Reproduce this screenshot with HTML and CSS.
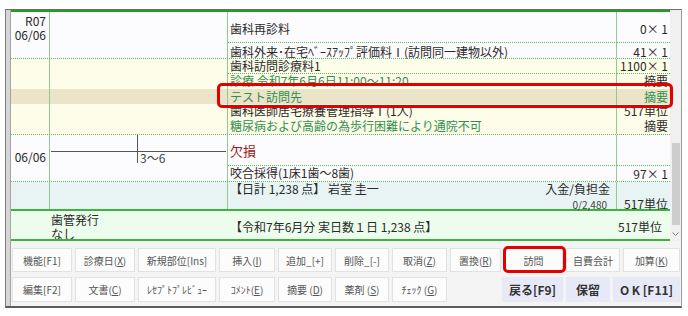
FILE: index.html
```html
<!DOCTYPE html>
<html lang="ja">
<head>
<meta charset="utf-8">
<title>診療</title>
<link rel="stylesheet" href="styles.css">
</head>
<body>
<div class="frame">
  <div class="upper">
    <div class="list">
      <div class="block b1">
        <div class="date d1">R07<br>06/06</div>
        <div class="teeth"></div>
        <div class="cnt g1 sep p9">歯科再診料</div>
        <div class="amt g1 sep p9">0×&nbsp;1</div>
        <div class="cnt g2 p1">歯科外来･在宅ﾍﾞｰｽｱｯﾌﾟ評価料Ⅰ(訪問同一建物以外)</div>
        <div class="amt g2 p1">41×&nbsp;1</div>
      </div>
      <div class="block b2">
        <div class="hl"></div>
        <div class="date"></div>
        <div class="teeth"></div>
        <div class="cnt g1 sep lh14">歯科訪問診療料1</div>
        <div class="amt g1 sep lh14">1100×&nbsp;1</div>
        <div class="cnt g2 lh14 green">診療 令和7年6月6日11:00～11:20</div>
        <div class="amt g2 lh14">摘要</div>
        <div class="cnt g3 green">テスト訪問先</div>
        <div class="amt g3 green">摘要</div>
        <div class="cnt g4 lh14">歯科医師居宅療養管理指導Ⅰ(1人)</div>
        <div class="amt g4 lh14">517単位</div>
        <div class="cnt g5 green">糖尿病および高齢の為歩行困難により通院不可</div>
        <div class="amt g5">摘要</div>
        <div class="redbox"></div>
      </div>
      <div class="block b3">
        <div class="date d3">06/06</div>
        <div class="teeth">
          <div class="chart">
            <div class="q q1"></div>
            <div class="q q2"></div>
            <div class="q q3"></div>
            <div class="q q4">3～6</div>
          </div>
        </div>
        <div class="cnt g1 sep p8 loss">欠損</div>
        <div class="amt g1 sep"></div>
        <div class="cnt g2 lh14">咬合採得(1床1歯～8歯)</div>
        <div class="amt g2 lh16">97×&nbsp;1</div>
      </div>
      <div class="block b4">
        <div class="date"></div>
        <div class="teeth"></div>
        <div class="cnt g1 total">
          <div class="tline"><span>【日計 1,238 点】 岩室 圭一</span><span>入金/負担金</span></div>
          <div class="tsub">0/2,480</div>
        </div>
        <div class="amt g1 tamt">517単位</div>
      </div>
      <div class="b5">
        <div class="sumleft">歯管発行<br>なし</div>
        <div class="summid">【令和7年6月分 実日数１日 1,238 点】</div>
        <div class="sumright">517単位</div>
      </div>
    </div>
    <div class="scroll">
      <div class="thumb"></div>
      <svg class="arrow" width="7" height="5" viewBox="0 0 7 5"><polyline points="0.5,0.5 3.5,3.5 6.5,0.5" fill="none" stroke="#777" stroke-width="1"/></svg>
    </div>
  </div>
  <div class="buttons">
    <div class="brow r1">
      <div class="btn w60">機能[F1]</div>
      <div class="btn w60">診療日(<u>X</u>)</div>
      <div class="btn w78">新規部位[Ins]</div>
      <div class="btn w56">挿入(<u>I</u>)</div>
      <div class="btn w54">追加_[+]</div>
      <div class="btn w54">削除_[-]</div>
      <div class="btn w55">取消(<u>Z</u>)</div>
      <div class="btn w51">置換(<u>R</u>)</div>
      <div class="btn w59">訪問</div>
      <div class="btn w54">自費会計</div>
      <div class="btn w57">加算(<u>K</u>)</div>
    </div>
    <div class="brow r2">
      <div class="btn w60">編集[F2]</div>
      <div class="btn w60">文書(<u>C</u>)</div>
      <div class="btn w78">ﾚｾﾌﾟﾄﾌﾟﾚﾋﾞｭｰ</div>
      <div class="btn w56">ｺﾒﾝﾄ(<u>E</u>)</div>
      <div class="btn w54">摘要 (<u>D</u>)</div>
      <div class="btn w54">薬剤 (<u>S</u>)</div>
      <div class="btn w55">ﾁｪｯｸ (<u>G</u>)</div>
      <div class="bspace"></div>
      <div class="btn em w61">戻る[F9]</div>
      <div class="btn em w44">保留</div>
      <div class="btn em w67">O K [F11]</div>
    </div>
    <div class="bredbox"></div>
  </div>
</div>
</body>
</html>
```

FILE: styles.css
```css
* { box-sizing: border-box; }
html, body { margin: 0; padding: 0; }
body {
  width: 688px;
  height: 316px;
  overflow: hidden;
  background: #ffffff;
  font-family: "Noto Sans CJK JP", "Noto Sans", sans-serif;
  font-size: 12px;
  color: #2a2a2a;
}
.frame {
  margin: 9px 0 0 5px;
  width: 677px;
  border-top: 1px solid #6e6e6e;
  border-left: 1px solid #7d7d7d;
  border-right: 1px solid #9b9b9b;
  border-bottom: 2px solid #5c5c5c;
  padding-left: 5px;
  box-shadow: inset 4px 0 0 #d6d6d6, inset 5px 0 0 #a4a4a4;
}
.upper { display: flex; height: 231px; }
.list {
  width: 659px;
  border-top: 2px solid #1f9e1f;
  display: flex;
  flex-direction: column;
}
.block {
  position: relative;
  display: grid;
  grid-template-columns: 39px 178px 389px 53px;
  border-bottom: 1px dotted #5cb85c;
}
.b1 { background: #fcfbfd; grid-template-rows: 31px 15px; }
.b2 { background: #fdfdea; grid-template-rows: 15px 15px 15px 14px 16px; }
.b3 { background: #fcfbfd; grid-template-rows: 31px 15px; }
.b4 { background: #e8f3f3; grid-template-rows: 27px; border-bottom: 2px solid #3cb43c; }

.date {
  grid-column: 1;
  grid-row: 1 / -1;
  border-right: 1px solid #8dcc8d;
  text-align: right;
  padding-right: 3px;
  line-height: 14px;
}
.d1 { padding-top: 2px; }
.d3 { padding-top: 15px; }
.teeth {
  grid-column: 2;
  grid-row: 1 / -1;
  border-right: 1px solid #8dcc8d;
}
.cnt {
  grid-column: 3;
  border-right: 1px solid #8dcc8d;
  padding-left: 2px;
  line-height: 15px;
  white-space: nowrap;
}
.amt {
  grid-column: 4;
  text-align: right;
  padding-right: 2px;
  line-height: 15px;
  white-space: nowrap;
}
.g1 { grid-row: 1; }
.g2 { grid-row: 2; }
.g3 { grid-row: 3; }
.g4 { grid-row: 4; }
.g5 { grid-row: 5; }
.sep { border-bottom: 1px dotted #5cb85c; }
.p9 { padding-top: 9px; }
.p8 { padding-top: 8px; }
.p1 { padding-top: 1px; }
.lh14 { line-height: 14px; }
.lh16 { line-height: 16px; }
.green { color: #2f8f4f; }
.loss { color: #a01818; font-size: 13px; }
.hl { grid-column: 1 / -1; grid-row: 3; background: #ebe4c8; }

.redbox {
  position: absolute;
  left: 206px;
  top: 24px;
  width: 456px;
  height: 25px;
  border: 3px solid #e50000;
  border-radius: 5px;
}

.chart {
  display: grid;
  grid-template-columns: 87px 88px;
  grid-template-rows: 17px 11px;
  margin-left: 1px;
}
.q1 { border-right: 1px solid #555; border-bottom: 1px solid #555; }
.q2 { border-bottom: 1px solid #555; }
.q3 { border-right: 1px solid #555; }
.q4 { padding-left: 2px; font-size: 12px; line-height: 11px; color: #444; white-space: nowrap; }

.total { line-height: 14px; padding-right: 6px; }
.tline { display: flex; justify-content: space-between; }
.tsub { text-align: right; font-size: 10px; line-height: 10px; padding-top: 4px; padding-right: 3px; color: #444; }
.tamt { padding-top: 15px; line-height: 14px; }

.b5 {
  display: flex;
  height: 30px;
  background: #edfded;
  border-bottom: 2px solid #3cb43c;
  overflow: hidden;
  line-height: 14px;
  white-space: nowrap;
}
.sumleft { width: 217px; padding-left: 40px; padding-top: 2px; }
.summid { flex: 1; padding-left: 2px; padding-top: 9px; }
.sumright { padding-right: 8px; padding-top: 9px; }

.scroll {
  width: 11px;
  background: #f0f0f0;
  display: flex;
  flex-direction: column;
  align-items: center;
}
.thumb { margin-top: 133px; width: 8px; height: 82px; background: #cdcdcd; }
.arrow { margin-top: 7px; display: block; }

.buttons {
  position: relative;
  height: 65px;
  background: #f4f4f4;
  padding: 7px 0 4px 1px;
  display: flex;
  flex-direction: column;
  gap: 5px;
}
.brow { display: flex; gap: 3px; }
.r1 { height: 24px; }
.r2 { height: 25px; }
.btn {
  background: #fcfcfc;
  border: 1px solid #e2e2e2;
  font-size: 10px;
  color: #555;
  display: flex;
  align-items: center;
  justify-content: center;
  white-space: nowrap;
}
.btn u { text-underline-offset: 1px; }
.em {
  background: #e7eaf6;
  border-color: #e7eaf6;
  font-size: 12px;
  font-weight: bold;
  color: #333;
}
.bspace { width: 49px; }
.w44 { width: 44px; }
.w51 { width: 51px; }
.w54 { width: 54px; }
.w55 { width: 55px; }
.w56 { width: 56px; }
.w57 { width: 57px; }
.w59 { width: 59px; }
.w60 { width: 60px; }
.w61 { width: 61px; }
.w67 { width: 67px; }
.w78 { width: 78px; }
.bredbox {
  position: absolute;
  left: 492px;
  top: 5px;
  width: 63px;
  height: 27px;
  border: 3px solid #e50000;
  border-radius: 5px;
}
```
